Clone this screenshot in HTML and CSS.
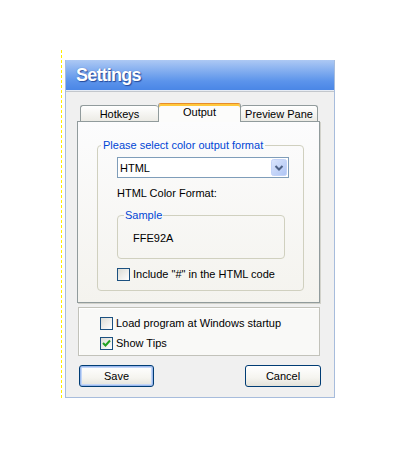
FILE: index.html
```html
<!DOCTYPE html>
<html>
<head>
<meta charset="utf-8">
<link rel="stylesheet" href="styles.css">
</head>
<body>
<div class="stage">
  <div class="window">
    <div class="titlebar"><span class="title">Settings</span></div>
    <div class="body">
      <div class="tabs">
        <div class="tab t-hot">Hotkeys</div>
        <div class="tab t-out active">Output</div>
        <div class="tab t-prev">Preview Pane</div>
      </div>
      <div class="panel">
        <fieldset class="group">
          <legend>Please select color output format</legend>
          <div class="select">
            <span class="select-text">HTML</span>
            <span class="arrow">
              <svg width="16" height="17" viewBox="0 0 16 17">
                <defs>
                  <linearGradient id="ag" x1="0" y1="0" x2="1" y2="1">
                    <stop offset="0" stop-color="#dbe6fd"/>
                    <stop offset="1" stop-color="#aec4f4"/>
                  </linearGradient>
                </defs>
                <rect x="0.5" y="0.5" width="15" height="16" rx="2" fill="url(#ag)" stroke="#c3d3f8"/>
                <path d="M4.5 7 L8 10.5 L11.5 7" fill="none" stroke="#4d6185" stroke-width="2"/>
              </svg>
            </span>
          </div>
          <div class="label">HTML Color Format:</div>
          <fieldset class="sample">
            <legend>Sample</legend>
            <div class="value">FFE92A</div>
          </fieldset>
          <label class="check inc"><span class="box"></span><span>Include "#" in the HTML code</span></label>
        </fieldset>
      </div>
      <div class="options">
        <label class="check"><span class="box"></span><span>Load program at Windows startup</span></label>
        <label class="check"><span class="box"><svg width="11" height="11" viewBox="0 0 11 11"><path d="M2 5 L4.5 7.5 L9 2.5" fill="none" stroke="#21a121" stroke-width="2"/></svg></span><span>Show Tips</span></label>
      </div>
      <div class="buttons">
        <button class="btn default">Save</button>
        <button class="btn cancel">Cancel</button>
      </div>
    </div>
  </div>
</div>
</body>
</html>
```

FILE: styles.css
```css
body {
  margin: 0;
  background: #ffffff;
  font-family: "Liberation Sans", Arial, sans-serif;
  font-size: 11px;
  color: #000;
}

.stage {
  margin: 50px 0 0 61px;
  padding: 10px 0 0 3px;
  border-left: 1px dashed #ffee00;
  width: 272px;
}

.window {
  width: 270px;
  box-sizing: border-box;
  border: 1px solid #a7bcdc;
  border-top: 0;
  background: #f0f0f0;
}

.titlebar {
  height: 31px;
  box-sizing: border-box;
  border-bottom: 1px solid #e6ecf5;
  background: linear-gradient(180deg, #adc9f4 0%, #8ab2f0 30%, #5c94eb 70%, #4a86e6 100%);
  display: flex;
  align-items: center;
  padding-left: 10px;
}

.title {
  color: #ffffff;
  font-weight: bold;
  font-size: 18px;
  letter-spacing: -0.8px;
  text-shadow: 1px 1px 1px #24499a, 0 0 1px #3a68b8;
  margin-top: 1px;
}

.body {
  border-top: 1px solid #c3c7cc;
  padding: 11px 0 10px 11px;
}

.tabs {
  display: flex;
  align-items: flex-end;
  height: 18px;
  margin-left: 3px;
}

.tab {
  height: 16px;
  box-sizing: border-box;
  border: 1px solid #919b9c;
  border-bottom: 0;
  border-radius: 3px 3px 0 0;
  background: linear-gradient(180deg, #ffffff, #ecebe5);
  text-align: center;
  line-height: 17px;
  overflow: visible;
}

.t-hot { width: 78px; border-right: 0; }
.t-out { width: 83px; }
.t-prev { width: 77px; border-left: 0; }

.tab.active {
  height: 19px;
  margin-bottom: -1px;
  position: relative;
  z-index: 1;
  background: #fcfcfb;
  border-top: 1px solid #e68b2c;
  box-shadow: inset 0 2px 0 #ffc83c;
  line-height: 17px;
}

.panel {
  width: 243px;
  height: 182px;
  box-sizing: border-box;
  border: 1px solid #919b9c;
  background: linear-gradient(180deg, #fcfcfd, #f4f3ee);
  box-shadow: 1px 1px 0 #d2d2cb;
  padding: 17px 0 0 19px;
}

fieldset {
  margin: 0;
  padding: 0;
  min-inline-size: 0;
  border: 1px solid #d0d0bf;
  border-radius: 4px;
}

legend {
  color: #0046d5;
  line-height: 13px;
  padding: 0 2px;
  margin-left: 3px;
}

.group {
  width: 207px;
  box-sizing: border-box;
  padding-bottom: 9px;
}

.select {
  margin: 5px 0 0 19px;
  width: 172px;
  height: 21px;
  box-sizing: border-box;
  border: 1px solid #7f9db9;
  background: #fff;
  display: flex;
  align-items: center;
  justify-content: space-between;
  padding: 0 1px 0 2px;
}

.arrow {
  display: flex;
}

.label {
  margin: 9px 0 0 19px;
  line-height: 13px;
}

.sample {
  margin: 9px 0 0 19px;
  width: 168px;
  box-sizing: border-box;
  padding-bottom: 13px;
}

.sample legend {
  margin-left: 6px;
  padding: 0 1px;
}

.value {
  margin: 10px 0 0 15px;
  line-height: 13px;
}

.check {
  display: flex;
  align-items: center;
  gap: 3px;
  height: 13px;
  line-height: 13px;
}

.check.inc {
  margin: 9px 0 0 19px;
}

.box {
  width: 13px;
  height: 13px;
  box-sizing: border-box;
  border: 1px solid #1c5180;
  background: linear-gradient(135deg, #dcdcd5, #ffffff);
  display: flex;
  align-items: center;
  justify-content: center;
}

.options {
  margin: 4px 0 0 1px;
  width: 242px;
  height: 49px;
  box-sizing: border-box;
  border: 1px solid #c2c2ba;
  box-shadow: inset 1px 1px 0 #ffffff;
  background: #f9f9f7;
  padding: 9px 0 0 21px;
  display: flex;
  flex-direction: column;
  gap: 7px;
}

.buttons {
  margin: 9px 0 0 2px;
  width: 242px;
  display: flex;
  justify-content: space-between;
}

.btn {
  height: 22px;
  box-sizing: border-box;
  border: 1px solid #003c74;
  border-radius: 3px;
  background: linear-gradient(180deg, #ffffff 0%, #f5f4ef 60%, #e3e2da 100%);
  font-family: "Liberation Sans", Arial, sans-serif;
  font-size: 11px;
  color: #000;
  padding: 0;
}

.btn.default {
  width: 75px;
  box-shadow: inset 0 0 0 1px #9ab8ec, inset 0 0 0 2px #c3d6f7;
}

.btn.cancel {
  width: 76px;
}
```
